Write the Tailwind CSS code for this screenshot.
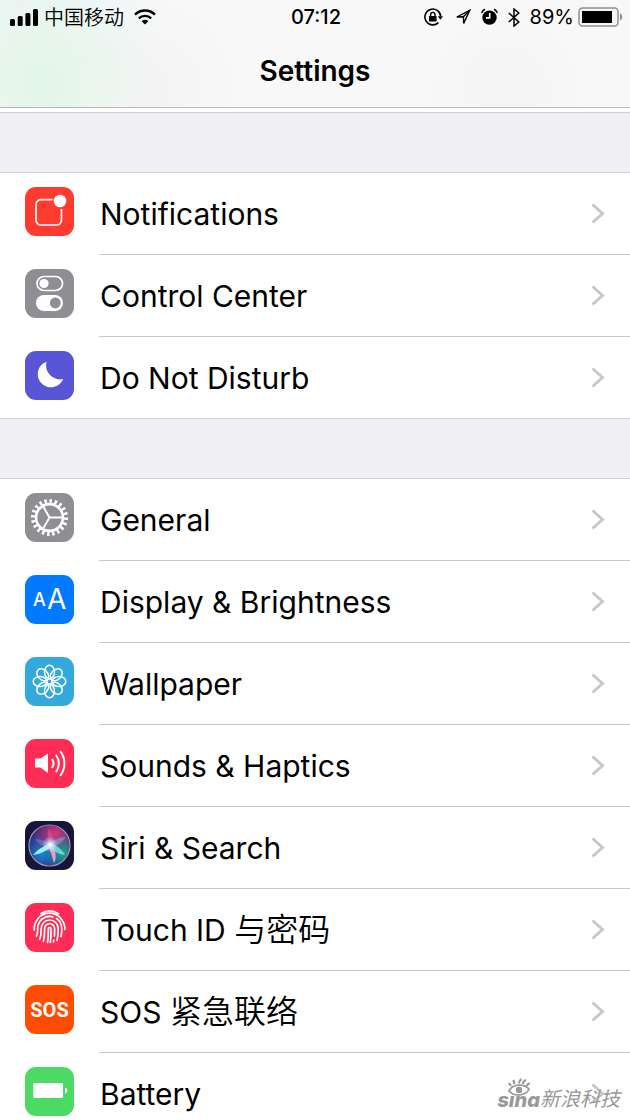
<!DOCTYPE html>
<html lang="en">
<head>
  <meta charset="UTF-8" />
  <meta name="viewport" content="width=device-width, initial-scale=1" />
  <title>Settings</title>
  <script src="https://cdn.jsdelivr.net/npm/@tailwindcss/browser@4"></script>
</head>
<body class="relative h-screen overflow-hidden bg-white text-black font-['Inter','Noto_Sans_CJK_SC',sans-serif]">

  <header class="h-27 border-b border-[#b9b9bb] bg-[#f8f8f8] bg-[radial-gradient(circle_at_42px_82px,#e2f6e7_0px,#e8f6eb_40px,transparent_110px),radial-gradient(circle_at_20px_0px,#e8f4f7_0px,transparent_150px),radial-gradient(circle_at_150px_85px,#f3f3f3_0px,transparent_90px),radial-gradient(circle_at_505px_90px,#f5f5f5_30px,transparent_80px)]">
    <!-- Status bar -->
    <div class="grid h-[34px] grid-cols-[1fr_auto_1fr] items-center pl-2.5 pr-2 text-xl leading-none">
      <div class="flex items-center gap-1.5">
        <svg class="h-[17px] w-7" viewBox="0 0 28 17">
          <rect x="0" y="10" width="5" height="7" rx="1.5" />
          <rect x="7.7" y="7" width="5" height="10" rx="1.5" />
          <rect x="15.4" y="4" width="5" height="13" rx="1.5" />
          <rect x="23" y="0" width="5" height="17" rx="1.5" />
        </svg>
        <span class="font-[350] font-['Noto_Sans_CJK_SC',sans-serif]">中国移动</span>
        <svg class="ml-1 h-4 w-[22px]" viewBox="0 0 22 16" fill="none" stroke="#000" stroke-width="2.3">
          <path d="M1 5.6a14.2 14.2 0 0 1 20 0M4.8 9.4a8.8 8.8 0 0 1 12.4 0" />
          <path d="M7.7 12.2a4.7 4.7 0 0 1 6.6 0L11 15.6z" fill="#000" stroke="none" />
        </svg>
      </div>
      <time class="font-medium">07:12</time>
      <div class="flex items-center justify-end">
        <svg class="mr-3 h-[18px] w-[19px]" viewBox="0 0 19 18" fill="none" stroke="#000" stroke-width="1.6">
          <path d="M14.4 14.6a7.9 7.9 0 1 1 2.3-6.2" />
          <path d="M13.8 8.2h5.2l-2.6 3.6z" fill="#000" stroke="none" />
          <rect x="5" y="8" width="7.6" height="5.6" rx=".6" fill="#000" stroke="none" />
          <path d="M6.6 8.4V6.6a2.2 2.2 0 0 1 4.4 0v1.8" stroke-width="1.4" />
        </svg>
        <svg class="mr-2.5 h-4 w-4" viewBox="0 0 16 16" fill="none" stroke="#000" stroke-width="1.4">
          <path d="M14.700 1.300L1.800 8l6.600-.3.300 6.700z" />
          <path d="M14.700 1.300L8.400 7.700" />
        </svg>
        <svg class="mr-2.5 h-[18px] w-[17px]" viewBox="0 0 17 18">
          <circle cx="8.5" cy="9.6" r="7.2" />
          <path d="M.6 4.8A8 8 0 0 1 3.9 1.3M16.4 4.8a8 8 0 0 0-3.3-3.5" fill="none" stroke="#000" stroke-width="1.6" />
          <path d="M8.7 5v4.9H5" fill="none" stroke="#fff" stroke-width="1.6" />
        </svg>
        <svg class="mr-2.5 h-[19px] w-3" viewBox="0 0 12 19" fill="none" stroke="#000" stroke-width="1.5">
          <path d="M.8 5l10 9L6 18V1l4.8 4L.8 14" />
        </svg>
        <span class="mr-1">89%</span>
        <svg class="-mr-0.5 h-5 w-[46px]" viewBox="0 0 46 20">
          <rect x="1" y="1" width="39" height="18" rx="3.5" fill="none" stroke="#909090" stroke-width="1.5" />
          <rect x="4" y="4" width="30" height="12" />
          <path d="M42 6.5c3 1 3 6 0 7z" fill="#909090" />
        </svg>
      </div>
    </div>
    <h1 class="pt-[19px] text-center text-[28px] leading-9 font-semibold">Settings</h1>
  </header>

  <main class="pt-1">
    <div class="h-[61px] border-y border-[#cfced3] bg-[#efeff4]"></div>
    <ul id="alertRows"></ul>
    <div class="h-[61px] border-y border-[#cfced3] bg-[#efeff4]"></div>
    <ul id="deviceRows"></ul>
  </main>

  <!-- Watermark -->
  <div class="absolute right-2.5 bottom-2.5 flex items-end text-[#999]">
    <div class="flex flex-col items-center">
      <svg class="-mb-1.5 h-[18px] w-6" viewBox="0 0 24 18" fill="none" stroke="#999" stroke-width="1.8">
        <path d="M2 13C5 6 17 5 22 11c-3 7-15 8-20 2z" />
        <circle cx="12" cy="12" r="3.200" fill="#999" stroke="none" />
        <path d="M4 8L2 5M7.500 6L6.500 2M12 5.500c0-2 1-3.500 2.500-4.500M16 6c0-2 1.500-3.500 3-4M20 8c0-1.500 1.500-2.500 3-2.500" stroke-width="2.200" />
      </svg>
      <span class="font-['Inter',sans-serif] text-xl leading-5 font-extrabold italic">sına</span>
    </div>
    <span class="text-xl leading-6 italic font-['Noto_Sans_CJK_SC',sans-serif]">新浪科技</span>
  </div>

  <script>
    const alertRows = [
      {
        label: 'Notifications',
        tile: 'bg-[#ff3b30]',
        icon: `
          <path d="M27.500 12.700H16a5 5 0 0 0-5 5V33a5 5 0 0 0 5 5h15.500a5 5 0 0 0 5-5V22" fill="none" stroke="#fff" stroke-width="1.700" />
          <circle cx="35" cy="14" r="6.300" fill="#fff" />`
      },
      {
        label: 'Control Center',
        tile: 'bg-[#8e8e93]',
        icon: `
          <rect x="12" y="7.500" width="25.500" height="14" rx="7" fill="none" stroke="#fff" stroke-width="1.700" />
          <circle cx="19" cy="14.500" r="4.600" fill="#fff" />
          <rect x="11" y="26" width="27" height="16" rx="8" fill="#fff" />
          <circle cx="30.300" cy="34" r="5.400" fill="#8e8e93" />`
      },
      {
        label: 'Do Not Disturb',
        tile: 'bg-[#5856d6]',
        icon: `<path d="M21.500 10.700A13.200 13.200 0 1 0 38.200 28 14 14 0 0 1 21.500 10.700z" fill="#fff" />`
      }
    ];

    const petals = [0, 45, 90, 135, 180, 225, 270, 315]
      .map(a => `<ellipse cx="24.500" cy="15" rx="5" ry="6.800" transform="rotate(${a} 24.500 24.500)" />`)
      .join('');

    const deviceRows = [
      {
        label: 'General',
        tile: 'bg-[#8e8e93]',
        icon: `
          <g fill="none" stroke="#fff">
            <circle cx="24.500" cy="24.500" r="13.400" stroke-width="2.600" />
            <circle cx="24.500" cy="24.500" r="16.300" stroke-width="4.400" pathLength="100" stroke-dasharray="2.400 2.600" />
            <path d="M24.500 24.500H37M24.500 24.500l-6.300-11M24.500 24.500l-6.300 11" stroke-width="2" />
          </g>`
      },
      {
        label: 'Display & Brightness',
        tile: 'bg-[#007aff]',
        icon: `
          <text x="8" y="31" font-size="18" font-weight="500" fill="#fff">A</text>
          <text x="22" y="34" font-size="28" fill="#fff">A</text>`
      },
      {
        label: 'Wallpaper',
        tile: 'bg-[#34aadc]',
        icon: `<g fill="none" stroke="#fff" stroke-width="1.500">${petals}<circle cx="24.500" cy="24.500" r="2.800" /></g>`
      },
      {
        label: 'Sounds & Haptics',
        tile: 'bg-[#ff2d55]',
        icon: `
          <path d="M10 19.500h5.500L23 14.500v19.500l-7.500-5.500H10z" fill="#fff" />
          <path d="M27 20a8 8 0 0 1 0 9M31 16a14 14 0 0 1 0 17M35.200 12.200a20 20 0 0 1 0 24.600" fill="none" stroke="#fff" stroke-width="2" />`
      },
      {
        label: 'Siri & Search',
        tile: 'bg-[#17163a]',
        icon: `
          <defs>
            <radialGradient id="pink" cx=".65" cy=".2" r=".6"><stop offset="0" stop-color="#d9367f" /><stop offset="1" stop-color="#d9367f" stop-opacity="0" /></radialGradient>
            <radialGradient id="teal" cx=".85" cy=".7" r=".5"><stop offset="0" stop-color="#1fa596" /><stop offset="1" stop-color="#1fa596" stop-opacity="0" /></radialGradient>
            <radialGradient id="blue" cx=".3" cy=".7" r=".6"><stop offset="0" stop-color="#1989dc" /><stop offset="1" stop-color="#3b3bb0" stop-opacity=".4" /></radialGradient>
            <radialGradient id="glow"><stop offset="0" stop-color="#fff" /><stop offset="1" stop-color="#bfeaff" stop-opacity="0" /></radialGradient>
          </defs>
          <circle cx="24.500" cy="24.500" r="20" fill="url(#blue)" />
          <circle cx="24.500" cy="24.500" r="20" fill="url(#pink)" />
          <circle cx="24.500" cy="24.500" r="20" fill="url(#teal)" />
          <circle cx="24.500" cy="24.500" r="20.500" fill="none" stroke="#9c96b8" stroke-width="1.200" />
          <path d="M24 24c-2-6-2-11 0-16 4 5 5 10 4 16z" fill="#ef6aa8" opacity=".4" />
          <path d="M25 22C19 25 12 29 8 34c7-1 14-4 19-9z" fill="#8ff4f4" />
          <path d="M22 24c4 5 5 12 7 18 3-4 2-12-2-19z" fill="#f59ad6" opacity=".95" />
          <path d="M24 22c6 1 12 5 16 12-7-1-13-4-17-9z" fill="#7cecda" opacity=".75" />
          <path d="M23 24c5-5 11-8 18-8-4 6-10 9-17 10z" fill="#b8b5ff" opacity=".4" />
          <path d="M26 24c-5-4-10-6-16-6 3 5 9 8 15 8z" fill="#8a9dff" opacity=".35" />
          <circle cx="25" cy="23.500" r="8" fill="url(#glow)" />`
      },
      {
        label: 'Touch ID <span class="text-[32px] font-[350]">与密码</span>',
        tile: 'bg-[#ff2d55]',
        icon: `
          <g fill="none" stroke="#fff" stroke-width="1.700" stroke-linecap="round">
            <path d="M16 10.500a16.500 16.500 0 0 1 17.500.200" />
            <path d="M9.300 27c-.500-5 1.200-8.500 4.200-12a15 15 0 0 1 22 0c3 3.500 4.700 7.500 4.300 11.500" />
            <path d="M11.500 33c1.500-3 1-5 1.200-8a11.800 11.800 0 0 1 15.300-11M31.500 15.500c4 2.500 5.300 6.500 5.300 10.500 0 3-.200 5-.800 7.500" />
            <path d="M14.800 36c1.500-3.500 1.200-6.500 1.400-10.500a8.500 8.500 0 0 1 17 0c.1 4-.200 8-1.200 12" />
            <path d="M18.400 38.200c1.500-4.500 1-8.500 1.200-12.500a5 5 0 0 1 10 0c.1 2.800 0 5-.200 7.500M28.800 37l-.300 2" />
            <path d="M22.500 39.500c1-5 .700-9 .8-13.500 0-2 2.600-2 2.700 0 .1 4.700 0 9-.7 13.500" />
          </g>`
      },
      {
        label: 'SOS <span class="text-[32px] font-[350]">紧急联络</span>',
        tile: 'bg-[#ff4c00]',
        icon: `<text x="24.500" y="32" font-size="20" font-weight="700" text-anchor="middle" fill="#fff" font-family="Roboto, sans-serif">SOS</text>`
      },
      {
        label: 'Battery',
        tile: 'bg-[#4cd964]',
        icon: `
          <rect x="8.300" y="16" width="29.700" height="15" rx="1" fill="#fff" />
          <path d="M40 20.500c3 .8 3 5.200 0 6z" fill="#fff" />`
      }
    ];

    function renderRows(listId, rows) {
      document.getElementById(listId).innerHTML = rows.map((row, index) => `
        <li>
          <a href="#" class="flex h-[81px] items-center px-[25px]">
            <span class="pb-1">
              <svg class="size-[49px] rounded-[11px] ${row.tile}" viewBox="0 0 49 49" aria-hidden="true">${row.icon}</svg>
            </span>
            <span class="ml-[26px] flex-1 text-[30px] leading-10">${row.label.replace('&', '&amp;')}</span>
            <svg class="h-[21px] w-3.5" viewBox="0 0 14 21" fill="none" stroke="#c7c7cc" stroke-width="3" aria-hidden="true">
              <path d="M1.500 1.500l10 9-10 9" />
            </svg>
          </a>
          ${index < rows.length - 1 ? '<hr class="ml-[99px] border-[#c8c7cc]" />' : ''}
        </li>`).join('');
    }

    renderRows('alertRows', alertRows);
    renderRows('deviceRows', deviceRows);
  </script>
</body>
</html>
